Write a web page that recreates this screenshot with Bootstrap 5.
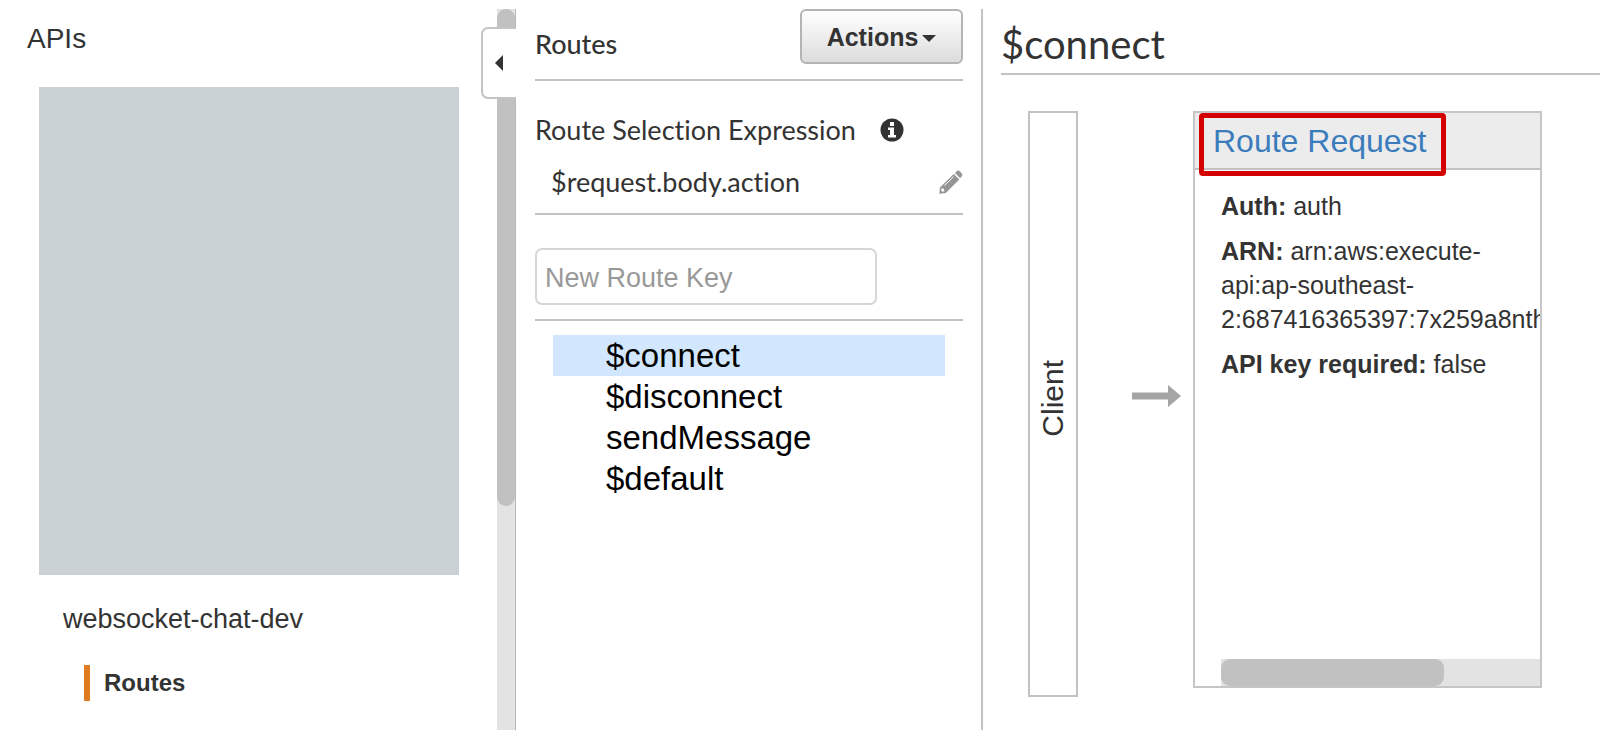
<!DOCTYPE html>
<html lang="en">
<head>
<meta charset="utf-8">
<meta name="viewport" content="width=device-width, initial-scale=1">
<title>API routes</title>
<link href="https://cdn.jsdelivr.net/npm/bootstrap@5.3.0/dist/css/bootstrap.min.css" rel="stylesheet">
<style>
  body { font-family: "Liberation Sans", Arial, sans-serif; color: #333; background: #fff; }
  .console { display: grid; grid-template-columns: 516fr 467fr 617fr; min-height: 100vh; padding-top: 9px; }
  .lato { font-family: Lato, "Liberation Sans", sans-serif; font-variant-ligatures: none; }
  .rule-b { border-bottom: 2px solid #c2c2c2; }

  /* API list */
  .api-title { font-size: 28px; line-height: 32px; padding: 14px 0 0 27px; margin-bottom: 32px; }
  .api-cover { height: 488px; margin: 0 38px 0 39px; background: #c9d1d4; }
  .api-name { font-size: 27px; line-height: 32px; margin: 28px 0 0 63px; }
  .api-sub { font-size: 24px; line-height: 36px; margin: 30px 0 0 84px; padding-left: 14px; border-left: 6px solid #e07b20; }
  .api-name a, .api-sub a { color: inherit; text-decoration: none; }
  .track-y { width: 19px; background: #e3e3e3; border-right: 1px solid #b8b8b8; }
  .thumb-y { height: 497px; background: #c1c1c1; border-radius: 9px; }
  .fold { top: 18px; right: 0; width: 35px; height: 72px; padding: 0 0 0 12px; background: #fff; border: 2px solid #c4c4c4; border-right: 0; border-radius: 7px 0 0 7px; }

  /* Routes */
  .routes { padding: 0 18px 0 19px; border-right: 2px solid #c2c2c2; }
  .routes-head { height: 72px; }
  .routes-head h2 { font-size: 27px; line-height: 32px; margin: 19px 0 0 0; }
  .btn-actions { width: 163px; height: 55px; padding: 3px 0 0; font-size: 25px; font-weight: 700; color: #333; border: 2px solid #b4b4b4; border-radius: 6px; background: linear-gradient(#fff, #dcdcdc); }
  .btn-actions::after { margin-left: 4px; border-top-width: 7px; border-left-width: 7px; border-right-width: 7px; vertical-align: 4px; }
  .expr { height: 134px; font-size: 27px; line-height: 32px; padding-top: 33px; }
  .key-form { height: 106px; padding-top: 33px; }
  .key-input { width: 80%; height: 57px; padding: 3px 8px 0; font-size: 27px; border: 2px solid #d6d6d6; border-radius: 7px; }
  .key-input::placeholder { color: #999; }
  .route-list { margin: 14px 18px 0; }
  .route-list a { display: block; font-size: 33px; line-height: 41px; padding-left: 53px; color: #000; text-decoration: none; }
  .route-list a.active { background: #d2e7fe; }
  .btn-plain { padding: 0; border: 0; background: none; }

  /* Route detail */
  .detail { padding-left: 18px; min-width: 0; }
  .detail h1 { height: 66px; font-size: 40px; line-height: 48px; padding-top: 11px; margin: 0 0 36px; }
  .flow { padding-left: 27px; }
  .client { width: 50px; height: 586px; padding-bottom: 12px; border: 2px solid #c2c2c2; font-size: 30px; }
  .client span { writing-mode: vertical-rl; transform: rotate(180deg); line-height: 32px; }
  .arrow { width: 115px; height: 570px; padding-right: 12px; }
  .panel { flex: 1; min-width: 0; height: 577px; margin-right: 58px; border: 2px solid #c6c6c6; }
  .panel-top { height: 57px; background: #ececec; border-bottom: 2px solid #c2c2c2; }
  .marked { height: 63px; margin-left: 4px; padding: 4px 15px 0 9px; font-size: 32px; line-height: 38px; color: #3b7cbd; text-decoration: none; border: 5px solid #d40000; border-radius: 4px; position: relative; }
  .panel-text { flex: 1; padding: 19px 0 0 26px; font-size: 25px; line-height: 34px; overflow: hidden; }
  .panel-text p { margin-bottom: 11px; }
  .track-x { height: 27px; margin-left: 26px; background: #e3e3e3; }
  .thumb-x { width: 70%; height: 27px; background: #c1c1c1; border-radius: 9px; }
</style>
</head>
<body>
<div class="console">
  <aside class="d-flex position-relative">
    <div class="flex-grow-1">
      <h2 class="api-title">APIs</h2>
      <div class="api-cover"></div>
      <div class="api-name"><a href="#">websocket-chat-dev</a></div>
      <div class="api-sub fw-bold"><a href="#">Routes</a></div>
    </div>
    <div class="track-y"><div class="thumb-y"></div></div>
    <button class="fold position-absolute d-flex align-items-center" type="button" aria-label="Collapse">
      <svg width="8" height="16" viewBox="0 0 8 16"><path d="M8 0v16L0 8z" fill="#333"/></svg>
    </button>
  </aside>

  <section class="routes">
    <div class="routes-head rule-b d-flex justify-content-between align-items-start">
      <h2 class="lato">Routes</h2>
      <button class="btn btn-actions dropdown-toggle" type="button" data-bs-toggle="dropdown">Actions</button>
    </div>
    <div class="expr rule-b lato">
      <div class="d-flex align-items-center">Route Selection Expression
        <svg class="ms-4" width="24" height="24" viewBox="0 0 24 24"><circle cx="12" cy="12" r="11.500" fill="#333"/><path d="M10 4h4v4h-4zM8 9.500h6v7.500h2v2.500H8V17h2v-5H8z" fill="#fff"/></svg>
      </div>
      <div class="d-flex align-items-center justify-content-between mt-3 pt-1 ps-3"><span>$request.body.action</span>
        <button class="btn-plain d-flex" type="button" aria-label="Edit expression">
          <svg width="24" height="24" viewBox="0 0 24 24"><path d="M14.800 4 1 17.500.300 23.700l6.500-.700L20.300 9.500z" fill="#959595"/><path d="M16 3 18 1q1.500-1 3 .500l1.700 1.800q1.300 1.500.300 2.700l-1.800 2.200z" fill="#959595"/><path d="M5.500 15.500 14.500 6.700" stroke="#fff" stroke-width="1"/><path d="M2.600 18.300l2.200.400.700 2.500-2 .500-1.300-1.300z" fill="#fff"/></svg>
        </button>
      </div>
    </div>
    <form class="key-form rule-b">
      <input class="key-input form-control" type="text" placeholder="New Route Key" aria-label="New Route Key">
    </form>
    <nav class="route-list">
      <a class="active" href="#">$connect</a>
      <a href="#">$disconnect</a>
      <a href="#">sendMessage</a>
      <a href="#">$default</a>
    </nav>
  </section>

  <main class="detail">
    <h1 class="lato rule-b fw-normal">$connect</h1>
    <div class="flow d-flex">
      <div class="client d-flex align-items-center justify-content-center"><span>Client</span></div>
      <div class="arrow d-flex align-items-center justify-content-end">
        <svg width="49" height="22" viewBox="0 0 49 22"><path d="M0 7.500h36V0l13 11-13 11v-7.500H0z" fill="#a5a5a5"/></svg>
      </div>
      <div class="panel d-flex flex-column">
        <div class="panel-top d-flex align-items-start"><a class="marked" href="#">Route Request</a></div>
        <div class="panel-text">
          <p><strong>Auth:</strong> auth</p>
          <p><strong>ARN:</strong> arn:aws:execute-api:ap-southeast-2:687416365397:7x259a8nth</p>
          <p><strong>API key required:</strong> false</p>
        </div>
        <div class="track-x"><div class="thumb-x"></div></div>
      </div>
    </div>
  </main>
</div>
<script src="https://cdn.jsdelivr.net/npm/bootstrap@5.3.0/dist/js/bootstrap.bundle.min.js"></script>
</body>
</html>
